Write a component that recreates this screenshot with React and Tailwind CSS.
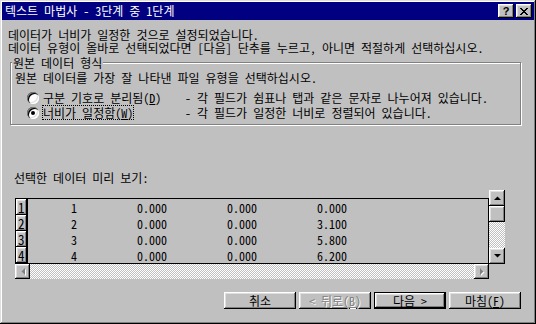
import React from 'react'

const raised =
  'bg-[#c0c0c0] shadow-[inset_-1px_-1px_0_#000,inset_1px_1px_0_#fff,inset_-2px_-2px_0_#808080,inset_2px_2px_0_#dfdfdf]'
const checker =
  'bg-[image:repeating-conic-gradient(#fff_0_25%,#c0c0c0_0_50%)] bg-[length:2px_2px]'

function Arrow({ dir, disabled }) {
  const pts = {
    up: '0,4 7,4 3.5,0.5',
    down: '0,0 7,0 3.5,3.5',
    left: '4,0 4,7 0.5,3.5',
    right: '0,0 0,7 3.5,3.5',
  }[dir]
  const vertical = dir === 'up' || dir === 'down'
  return (
    <svg width={vertical ? 7 : 4} height={vertical ? 4 : 7} className="overflow-visible">
      {disabled && <polygon points={pts} fill="#fff" transform="translate(1,1)" />}
      <polygon points={pts} fill={disabled ? '#808080' : '#000'} />
    </svg>
  )
}

function Radio({ checked }) {
  return (
    <span className="relative w-[12px] h-[12px] rounded-full bg-white shrink-0 shadow-[inset_1px_1px_0_#808080,inset_2px_2px_0_#000,inset_-1px_-1px_0_#fff,inset_-2px_-2px_0_#dfdfdf] flex items-center justify-center">
      {checked && <span className="w-[4px] h-[4px] rounded-full bg-black" />}
    </span>
  )
}

function Btn({ children, disabled, isDefault }) {
  const inner = (
    <div
      className={`${raised} w-full h-full flex items-center justify-center leading-none ${
        disabled ? 'text-[#808080] [text-shadow:1px_1px_0_#fff]' : 'text-black'
      }`}
    >
      {children}
    </div>
  )
  if (isDefault) {
    return <div className="w-[72px] h-[17px] border border-black">{inner}</div>
  }
  return <div className="w-[72px] h-[17px]">{inner}</div>
}

const rows = [
  ['1', '0.000', '0.000', '0.000'],
  ['2', '0.000', '0.000', '3.100'],
  ['3', '0.000', '0.000', '5.800'],
  ['4', '0.000', '0.000', '6.200'],
]

export default function App() {
  return (
    <div className="w-[536px] h-[324px] bg-[#c0c0c0] p-[2px] flex flex-col text-[12px] text-black font-['Noto_Sans_Mono_CJK_KR','Noto_Sans_CJK_KR',sans-serif] shadow-[inset_-1px_-1px_0_#000,inset_1px_1px_0_#dfdfdf,inset_-2px_-2px_0_#808080,inset_2px_2px_0_#fff]">
      {/* title bar */}
      <div className="h-[18px] bg-[#000080] flex items-center pl-[3px] pr-[2px] shrink-0">
        <span className="flex-1 text-white leading-none">텍스트 마법사 - 3단계 중 1단계</span>
        <div className="flex gap-[2px]">
          <div className={`${raised} w-[16px] h-[14px] flex items-center justify-center`}>
            <span className="font-['Liberation_Sans',sans-serif] font-bold text-[11px] leading-none">?</span>
          </div>
          <div className={`${raised} w-[16px] h-[14px] flex items-center justify-center`}>
            <svg width="8" height="7" shapeRendering="crispEdges">
              <path d="M0 0h2v1h-2zM6 0h2v1h-2zM1 1h2v1h-2zM5 1h2v1h-2zM2 2h4v1h-4zM3 3h2v1h-2zM2 4h4v1h-4zM1 5h2v1h-2zM5 5h2v1h-2zM0 6h2v1h-2zM6 6h2v1h-2z" fill="#000" />
            </svg>
          </div>
        </div>
      </div>

      {/* intro */}
      <div className="pl-[6px] pt-[8px] leading-[13px]">
        <p>데이터가 너비가 일정한 것으로 설정되었습니다.</p>
        <p>데이터 유형이 올바로 선택되었다면 [다음] 단추를 누르고, 아니면 적절하게 선택하십시오.</p>
      </div>

      {/* group box */}
      <div className="relative mt-[8px] ml-[8px] w-[511px] h-[63px] border border-[#808080] shadow-[1px_1px_0_#fff,inset_1px_1px_0_#fff] pl-[4px] pt-[8px]">
        <span className="absolute left-[1px] -top-[7px] bg-[#c0c0c0] px-[1px] leading-[13px]">원본 데이터 형식</span>
        <p className="leading-[13px]">원본 데이터를 가장 잘 나타낸 파일 유형을 선택하십시오.</p>
        <div className="mt-[6px] flex items-center h-[15px] pl-[12px]">
          <Radio />
          <span className="ml-[3px] w-[143px] leading-[13px]">
            <span className="border border-transparent inline-block">
              구분 기호로 분리됨(<u>D</u>)
            </span>
          </span>
          <span className="leading-[13px]">- 각 필드가 쉼표나 탭과 같은 문자로 나누어져 있습니다.</span>
        </div>
        <div className="flex items-center h-[15px] pl-[12px]">
          <Radio checked />
          <span className="ml-[3px] w-[143px] leading-[13px]">
            <span className="border border-dotted border-black inline-block">
              너비가 일정함(<u>W</u>)
            </span>
          </span>
          <span className="leading-[13px]">- 각 필드가 일정한 너비로 정렬되어 있습니다.</span>
        </div>
      </div>

      <p className="mt-[46px] ml-[12px] leading-[13px]">선택한 데이터 미리 보기:</p>

      {/* preview */}
      <div className="mt-[6px] ml-[13px] flex items-start">
        <div className="mt-[8px] w-[474px] flex flex-col">
          <div className="h-[66px] border border-black flex">
            <div className="w-[12px] flex flex-col border-r border-black">
              {rows.map((r) => (
                <div
                  key={r[0]}
                  className={`${raised} h-[16px] flex items-center pl-[2px] pt-[1px] text-[13px] leading-[15px]`}
                >
                  {r[0]}
                </div>
              ))}
            </div>
            <div className="flex flex-col">
              {rows.map((r) => (
                <div key={r[0]} className="h-[16px] flex items-center leading-[13px]">
                  <span className="w-[49px] text-right">{r[0]}</span>
                  <span className="w-[90px] text-right">{r[1]}</span>
                  <span className="w-[90px] text-right">{r[2]}</span>
                  <span className="w-[90px] text-right">{r[3]}</span>
                </div>
              ))}
            </div>
          </div>
          <div className={`h-[15px] flex ${checker}`}>
            <div className={`${raised} w-[15px] h-[15px] flex items-center justify-center`}>
              <Arrow dir="left" disabled />
            </div>
            <div className="flex-1" />
            <div className={`${raised} w-[15px] h-[15px] flex items-center justify-center`}>
              <Arrow dir="right" disabled />
            </div>
          </div>
        </div>
        <div className="w-[16px] h-[74px] flex flex-col">
          <div className={`${raised} h-[16px] flex items-center justify-center`}>
            <Arrow dir="up" />
          </div>
          <div className={`${raised} h-[16px]`} />
          <div className={`flex-1 ${checker}`} />
          <div className={`${raised} h-[16px] flex items-center justify-center`}>
            <Arrow dir="down" />
          </div>
        </div>
      </div>

      {/* buttons */}
      <div className="mt-[13px] flex justify-end gap-[3px] pr-[13px]">
        <Btn>취소</Btn>
        <Btn disabled>&lt; 뒤로(<u>B</u>)</Btn>
        <Btn isDefault>다음 &gt;</Btn>
        <Btn>
          마침(<u>F</u>)
        </Btn>
      </div>
    </div>
  )
}
